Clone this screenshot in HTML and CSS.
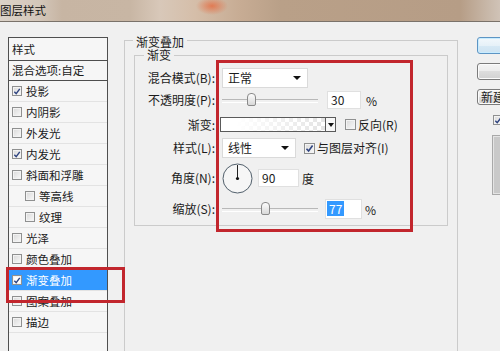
FILE: index.html
```html
<!DOCTYPE html>
<html lang="zh-CN">
<head>
  <meta charset="UTF-8">
  <title>图层样式</title>
  <link rel="stylesheet" href="styles.css">
</head>
<body>
  <div class="titlebar">图层样式</div>

  <div class="dialog">
    <div class="sidebar">
      <div class="side-head">样式</div>
      <div class="side-blend">混合选项:自定</div>
      <ul class="side-list">
        <li><span class="cb"><svg viewBox="0 0 9 9"><path d="M1.5 4.8 3.6 7 7.6 1.6"/></svg></span>投影</li>
        <li><span class="cb"></span>内阴影</li>
        <li><span class="cb"></span>外发光</li>
        <li><span class="cb"><svg viewBox="0 0 9 9"><path d="M1.5 4.8 3.6 7 7.6 1.6"/></svg></span>内发光</li>
        <li><span class="cb"></span>斜面和浮雕</li>
        <li class="sub"><span class="cb"></span>等高线</li>
        <li class="sub"><span class="cb"></span>纹理</li>
        <li><span class="cb"></span>光泽</li>
        <li><span class="cb"></span>颜色叠加</li>
        <li class="active"><span class="cb"><svg viewBox="0 0 9 9"><path d="M1.5 4.8 3.6 7 7.6 1.6"/></svg></span>渐变叠加</li>
        <li><span class="cb"></span>图案叠加</li>
        <li><span class="cb"></span>描边</li>
      </ul>
    </div>

    <div class="main">
      <div class="group group-outer">
        <div class="group-title">渐变叠加</div>
        <div class="group group-inner">
          <div class="group-title">渐变</div>
          <div class="form">
            <label>混合模式(B):</label>
            <div class="ctl">
              <div class="select select-blend">正常<i class="arrow"></i></div>
            </div>

            <label>不透明度(P):</label>
            <div class="ctl">
              <div class="slider"><span class="thumb" style="left: 25px"></span></div>
              <div class="num num-opacity">30</div>
              <span class="unit">%</span>
            </div>

            <label>渐变:</label>
            <div class="ctl">
              <div class="swatch"><div class="swatch-fill"></div><div class="swatch-btn"><i class="arrow"></i></div></div>
              <span class="cb cb-reverse"></span>
              <span class="cb-text">反向(R)</span>
            </div>

            <label>样式(L):</label>
            <div class="ctl">
              <div class="select select-style">线性<i class="arrow"></i></div>
              <span class="cb cb-align"><svg viewBox="0 0 9 9"><path d="M1.5 4.8 3.6 7 7.6 1.6"/></svg></span>
              <span class="cb-text">与图层对齐(I)</span>
            </div>

            <label>角度(N):</label>
            <div class="ctl">
              <svg class="dial" viewBox="0 0 31 31">
                <circle cx="15.5" cy="15.5" r="14.5" fill="#f6f6f6" stroke="#52606c" stroke-width="1"/>
                <line x1="15.5" y1="15.5" x2="15.5" y2="2" stroke="#222" stroke-width="1"/>
                <circle cx="15.5" cy="15.5" r="1.6" fill="#111"/>
              </svg>
              <div class="num num-angle">90</div>
              <span class="unit unit-deg">度</span>
            </div>

            <label>缩放(S):</label>
            <div class="ctl">
              <div class="slider"><span class="thumb" style="left: 39px"></span></div>
              <div class="num num-scale"><span class="sel">77</span></div>
              <span class="unit unit-scale">%</span>
            </div>
          </div>
          <div class="mark"></div>
        </div>
      </div>
    </div>

    <div class="actions">
      <div class="btn btn-default"></div>
      <div class="btn"></div>
      <div class="btn btn-new">新建样式(W)...</div>
      <span class="cb cb-preview"><svg viewBox="0 0 9 9"><path d="M1.5 4.8 3.6 7 7.6 1.6"/></svg></span>
      <div class="preview"></div>
    </div>
  </div>
</body>
</html>
```

FILE: styles.css
```css
* {
  box-sizing: border-box;
}

body {
  margin: 0;
  width: 500px;
  height: 351px;
  overflow: hidden;
  background-color: #f0f0f0;
  font-family: "Noto Sans CJK SC", "Liberation Sans", sans-serif;
  font-size: 12px;
  color: #1b1b1b;
}

.titlebar {
  height: 22px;
  line-height: 20px;
  font-size: 11.5px;
  color: #111;
  border-bottom: 1px solid #7a726a;
  background:
    radial-gradient(ellipse 16px 9px at 212px 6px, rgba(228, 112, 70, 0.85), rgba(228, 112, 70, 0)),
    linear-gradient(to right, #dbd2c8 0, #d3c6b9 40px, #c7b5a3 62px, #c8b6a4 130px, #d8c8b9 160px, #d5bea9 195px, #c7ac94 240px, #b9a088 280px, #b69d86 460px, #c8b8a9 488px, #d0c3b7 500px);
}

.dialog {
  display: flex;
  align-items: flex-start;
  width: 600px;
}

/* left list */
.sidebar {
  flex: none;
  margin: 15px 0 0 8px;
  width: 100px;
  height: 330px;
  border: 1px solid #4f4f4f;
  background-color: #f6f6f6;
  font-size: 11.5px;
}

.side-head {
  height: 23px;
  line-height: 22px;
  padding-left: 3px;
  border-bottom: 1px solid #4f4f4f;
}

.side-blend {
  height: 20px;
  line-height: 19px;
  padding-left: 3px;
  border-bottom: 1px solid #4f4f4f;
  white-space: nowrap;
}

.side-list {
  list-style: none;
  margin: 0;
  padding: 0;
}

.side-list li {
  position: relative;
  display: flex;
  align-items: center;
  gap: 4px;
  height: 21px;
  padding-left: 3px;
  border-bottom: 1px solid #e3e3e3;
  white-space: nowrap;
}

.side-list li.sub {
  padding-left: 16px;
}

.side-list li.active {
  background-color: #3399ff;
  color: #fff;
}

.side-list li.active .cb {
  background: #fff;
}

.side-list li.active::after {
  content: "";
  position: absolute;
  left: -3px;
  top: -3px;
  width: 113px;
  height: 30px;
  border: 3px solid #c2262d;
  z-index: 2;
}

.side-list .cb {
  width: 10px;
  height: 10px;
}

/* checkbox */
.cb {
  display: inline-flex;
  align-items: center;
  justify-content: center;
  flex: none;
  width: 11px;
  height: 11px;
  border: 1px solid #8f9090;
  background: linear-gradient(135deg, #d9d9d9, #f9f9f9);
  box-shadow: inset 0 0 0 1px #f3f3f3;
}

.cb svg {
  width: 9px;
  height: 9px;
}

.cb path {
  fill: none;
  stroke: #2f4480;
  stroke-width: 1.6;
}

.cb-text {
  margin-left: 2px;
  line-height: 14px;
  white-space: nowrap;
}

/* group boxes */
.main {
  flex: none;
  margin: 18px 0 0 16px;
}

.group {
  border: 1px solid #cbcbcb;
}

.group-outer {
  width: 334px;
  height: 320px;
  padding: 0 9px;
}

.group-title {
  width: fit-content;
  padding: 0 3px;
  line-height: 14px;
  background-color: #f0f0f0;
}

.group-outer > .group-title {
  margin: -6px 0 0 -1px;
}

.group-inner {
  position: relative;
  margin-top: 6px;
  width: 314px;
  height: 171px;
}

.group-inner > .group-title {
  margin: -8px 0 0 9px;
}

.form {
  display: grid;
  grid-template-columns: 80px 1fr;
  grid-template-rows: 22px 22px 27px 20px 40px 22px;
  column-gap: 7px;
  margin-top: 5px;
}

.form label {
  align-self: center;
  text-align: right;
  line-height: 14px;
  white-space: nowrap;
}

.ctl {
  display: flex;
  align-items: center;
}

.select {
  position: relative;
  flex: none;
  height: 20px;
  line-height: 18px;
  padding-left: 5px;
  background-color: #fff;
  border: 1px solid #dadada;
}

.select-blend {
  width: 86px;
}

.select-style {
  width: 74px;
}

.arrow {
  position: absolute;
  right: 6px;
  top: 7px;
  width: 0;
  height: 0;
  border-left: 4px solid transparent;
  border-right: 4px solid transparent;
  border-top: 4px solid #111;
}

.slider {
  position: relative;
  flex: none;
  width: 96px;
  height: 14px;
}

.slider::before {
  content: "";
  position: absolute;
  left: 0;
  right: 0;
  top: 6px;
  height: 2px;
  border-top: 1px solid #b8b8b8;
  border-bottom: 1px solid #fff;
}

.thumb {
  position: absolute;
  top: 0;
  width: 9px;
  height: 13px;
  border: 1px solid #8a8a8a;
  border-radius: 4px 4px 2px 2px;
  background: linear-gradient(#fdfdfd, #d8d8d8);
}

.num {
  flex: none;
  height: 18px;
  line-height: 16px;
  padding-left: 3px;
  background-color: #fff;
  border: 1px solid #e0e0e0;
}

.num-opacity {
  width: 34px;
  margin-left: 9px;
}

.num-angle {
  width: 41px;
  margin-left: 5px;
}

.num-scale {
  width: 37px;
  height: 20px;
  margin-left: 7px;
  padding-left: 1px;
  line-height: 18px;
}

.sel {
  display: inline-block;
  height: 15px;
  line-height: 15px;
  padding: 0 2px;
  margin-top: 1px;
  vertical-align: top;
  background-color: #3399ff;
  color: #fff;
}

.unit {
  margin-left: 5px;
}

.unit-deg {
  margin-left: 3px;
}

.unit-scale {
  margin-left: 3px;
}

.swatch {
  display: flex;
  flex: none;
  margin-left: -2px;
  width: 116px;
  height: 15px;
  border: 1px solid #5a5a5a;
  background-color: #fff;
}

.swatch-fill {
  flex: 1;
  background:
    linear-gradient(to right, #fff 15%, rgba(255, 255, 255, 0) 100%),
    repeating-conic-gradient(#e4e4e4 0 25%, #fff 0 50%) 0 0 / 8px 8px;
}

.swatch-btn {
  position: relative;
  width: 10px;
  border-left: 1px solid #5a5a5a;
  background-color: #f7f7f7;
}

.swatch-btn .arrow {
  right: 1px;
  top: 5px;
  border-left-width: 3px;
  border-right-width: 3px;
}

.cb-reverse {
  margin-left: 9px;
}

.cb-align {
  margin-left: 8px;
}

.dial {
  flex: none;
  width: 31px;
  height: 31px;
}

.mark {
  position: absolute;
  left: 81px;
  top: 4px;
  width: 197px;
  height: 172px;
  border: 3px solid #c2262d;
}

/* right buttons */
.actions {
  display: flex;
  flex-direction: column;
  align-items: flex-start;
  gap: 9px;
  margin: 15px 0 0 19px;
  width: 80px;
  flex: none;
}

.btn {
  width: 80px;
  height: 17px;
  line-height: 14px;
  padding-left: 3px;
  border: 1px solid #7b7b7b;
  border-radius: 3px;
  background: linear-gradient(#f4f4f4 0, #ececec 50%, #dddddd 50%, #d2d2d2 100%);
  box-shadow: inset 0 0 0 1px #fbfbfb;
  white-space: nowrap;
  font-size: 12px;
}

.btn-default {
  border-color: #5d95c4;
  background: linear-gradient(#f2f8fc 0, #e6f1f8 50%, #d7e9f5 50%, #cde3f2 100%);
  box-shadow: inset 0 0 0 1px #c8ecff;
}

.btn-new {
  height: 16px;
}

.cb-preview {
  margin: 1px 0 0 16px;
  width: 10px;
  height: 10px;
}

.preview {
  margin: 1px 0 0 15px;
  width: 60px;
  height: 60px;
  border: 1px solid #a9a9a9;
  background-color: #c9c9c9;
  box-shadow: inset 0 0 0 1px #e4e4e4;
}
```
